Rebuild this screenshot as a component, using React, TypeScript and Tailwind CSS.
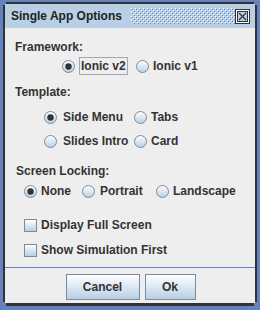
import React from 'react';

// Metal look-and-feel dialog: "Single App Options"

const Radio: React.FC<{ checked?: boolean }> = ({ checked = false }) => (
  <svg width="13" height="13" viewBox="0 0 13 13" className="shrink-0">
    <defs>
      <linearGradient id={checked ? 'rg-on' : 'rg-off'} x1="0" y1="0" x2="0" y2="1">
        <stop offset="0" stopColor="#ffffff" />
        <stop offset="1" stopColor="#b8cfe5" />
      </linearGradient>
    </defs>
    <circle cx="6.5" cy="6.5" r="6" fill={`url(#${checked ? 'rg-on' : 'rg-off'})`} stroke="#7a8a99" />
    {checked && <circle cx="6.5" cy="6.5" r="3.2" fill="#333333" />}
  </svg>
);

const RadioItem: React.FC<{
  label: string;
  checked?: boolean;
  gap: string;
  focused?: boolean;
  className?: string;
}> = ({ label, checked, gap, focused, className = '' }) => (
  <div className={`flex items-center h-[20px] ${gap} ${className}`}>
    <Radio checked={checked} />
    <span
      className={`leading-[16px] ${
        focused ? 'border border-[#99aabb] px-[1px] h-[18px] leading-[16px]' : ''
      }`}
    >
      {label}
    </span>
  </div>
);

const CheckItem: React.FC<{ label: string; className?: string }> = ({ label, className = '' }) => (
  <div className={`flex items-center h-[20px] gap-[4px] pl-[19px] ${className}`}>
    <div className="w-[13px] h-[13px] border border-[#7a8a99] bg-gradient-to-b from-white to-[#b8cfe5]" />
    <span>{label}</span>
  </div>
);

const Bumps: React.FC = () => (
  <svg width="104" height="16" className="block">
    <defs>
      <pattern id="bumps" width="4" height="4" patternUnits="userSpaceOnUse">
        <rect x="0" y="0" width="1" height="1" fill="#ffffff" />
        <rect x="1" y="1" width="1" height="1" fill="#6382bf" />
        <rect x="2" y="2" width="1" height="1" fill="#ffffff" />
        <rect x="3" y="3" width="1" height="1" fill="#6382bf" />
      </pattern>
    </defs>
    <rect width="104" height="16" fill="url(#bumps)" />
  </svg>
);

const CloseIcon: React.FC = () => (
  <svg width="15" height="15" viewBox="0 0 15 15" className="block">
    <rect x="0.5" y="0.5" width="14" height="14" fill="#ffffff" stroke="#333333" />
    <rect x="2.5" y="2.5" width="10" height="10" fill="#b8cfe5" stroke="#333333" />
    <path d="M4 4 L11 11 M11 4 L4 11" stroke="#333333" strokeWidth="1.2" />
  </svg>
);

const Button: React.FC<{ label: string; width: string }> = ({ label, width }) => (
  <button
    type="button"
    className={`${width} h-[26px] border border-[#7a8a99] bg-gradient-to-b from-white to-[#b8cfe5] text-[#333333] font-bold`}
  >
    {label}
  </button>
);

export default function App() {
  return (
    <div
      className="w-[260px] h-[310px] bg-[#6382bf] pt-[4px] px-[5px] pb-[7px] text-[12px] text-[#333333] font-bold"
      style={{ fontFamily: '"Liberation Sans", Arial, sans-serif' }}
    >
      <div className="h-full flex flex-col shadow-[-3px_0_0_-1px_#333333,0_-3px_0_-1px_#333333,3px_0_0_-1px_#333333,0_4px_0_-1px_#333333]">
        {/* Title bar */}
        <div className="h-[24px] bg-[#b8cfe5] flex items-center pl-[6px] pr-[5px] shrink-0">
          <span className="text-[12px] text-[#222222]">Single App Options</span>
          <div className="ml-[9px]">
            <Bumps />
          </div>
          <div className="ml-auto">
            <CloseIcon />
          </div>
        </div>

        {/* Content */}
        <div className="flex-1 bg-[#eeeeee] flex flex-col">
          <div className="pl-[10px] mt-[11px] h-[16px] leading-[16px]">Framework:</div>
          <div className="flex mt-[1px] pl-[57px]">
            <RadioItem label="Ionic v2" checked focused gap="gap-[4px]" className="w-[74px]" />
            <RadioItem label="Ionic v1" gap="gap-[4px]" />
          </div>

          <div className="pl-[10px] mt-[8px] h-[16px] leading-[16px]">Template:</div>
          <div className="grid grid-cols-[90px_auto] mt-[7px] pl-[39px]">
            <RadioItem label="Side Menu" checked gap="gap-[6px]" />
            <RadioItem label="Tabs" gap="gap-[4px]" />
          </div>
          <div className="grid grid-cols-[90px_auto] mt-[4px] pl-[39px]">
            <RadioItem label="Slides Intro" gap="gap-[6px]" />
            <RadioItem label="Card" gap="gap-[4px]" />
          </div>

          <div className="pl-[11px] mt-[12px] h-[16px] leading-[16px]">Screen Locking:</div>
          <div className="flex mt-[2px] pl-[19px]">
            <RadioItem label="None" checked gap="gap-[4px]" className="w-[58px]" />
            <RadioItem label="Portrait" gap="gap-[5px]" className="w-[74px]" />
            <RadioItem label="Landscape" gap="gap-[4px]" />
          </div>

          <CheckItem label="Display Full Screen" className="mt-[14px]" />
          <CheckItem label="Show Simulation First" className="mt-[5px]" />

          <div className="mt-[7px] h-px bg-[#6382bf]" />

          <div className="flex justify-center gap-[5px] mt-[6px] pl-[1px]">
            <Button label="Cancel" width="w-[74px]" />
            <Button label="Ok" width="w-[51px]" />
          </div>
        </div>
      </div>
    </div>
  );
}
